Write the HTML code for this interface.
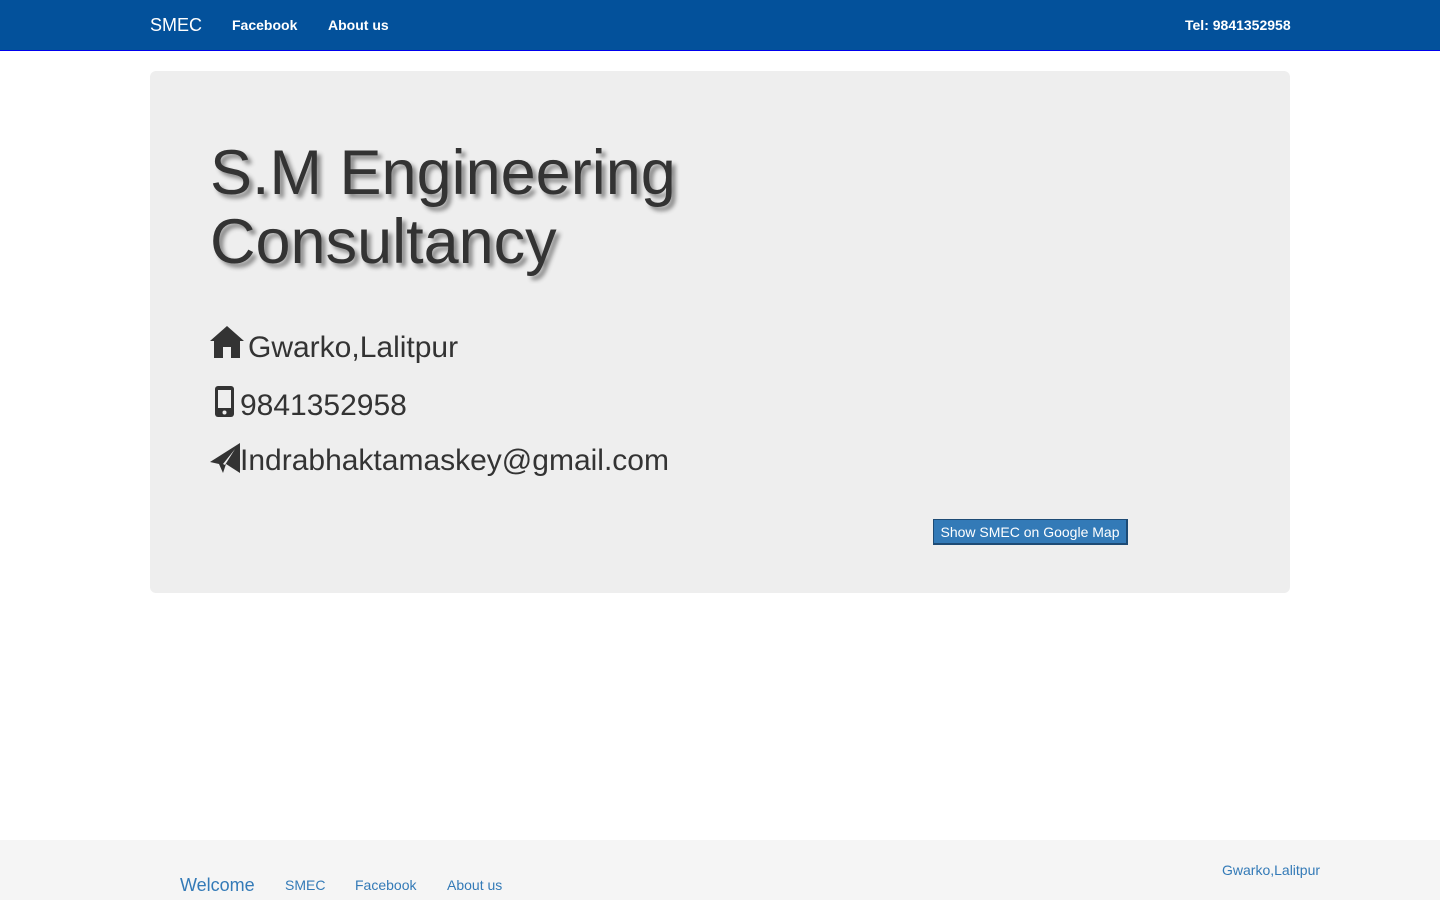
<!DOCTYPE html>
<html><head><meta charset="utf-8"><style>
*{box-sizing:border-box}
body{margin:0;font-family:"Liberation Sans",sans-serif;color:#333;background:#fff;width:1440px;height:910px;overflow:hidden;position:relative}
.nav{height:51px;background:#03519b;border-bottom:1px solid #0000ee;position:relative;color:#fff}
.nav span{position:absolute;top:0;line-height:50px}
.brand{left:150px;font-size:18px}
.nl{font-size:14px;font-weight:bold}
.jumbo{position:absolute;left:150px;top:71px;width:1140px;height:522px;background:#eee;border-radius:6px}
h1{position:absolute;left:60px;top:68px;margin:0;font-size:63px;font-weight:normal;line-height:69px;text-shadow:4px 4px 4px #888;color:#333}
.c{position:absolute;left:60px;font-size:30px;line-height:34px;display:flex;align-items:center}
.btn{position:absolute;left:783px;top:448px;width:195px;height:26px;background:#337ab7;color:#fff;font-size:14px;line-height:24px;text-align:center;border:1px solid #1d4b75;border-right-width:2px;border-bottom-width:2px}
.foot{position:absolute;left:0;top:840px;width:1440px;height:60px;background:#f5f5f5;color:#337ab7}
.foot span{position:absolute}
</style></head><body>
<div class="nav">
<span class="brand">SMEC</span>
<span class="nl" style="left:232px">Facebook</span>
<span class="nl" style="left:328px">About us</span>
<span class="nl" style="left:1185px">Tel: 9841352958</span>
</div>
<div class="jumbo">
<h1>S.M Engineering<br>Consultancy</h1>
<div class="c" style="top:258px"><svg width="34" height="32" viewBox="0 0 34 32" style="margin-right:4px;position:relative;top:-4px"><path d="M17 0L0 15h4v17h9V21h8v11h9V15h4z" fill="#333"/></svg><span style="position:relative;top:2px">Gwarko,Lalitpur</span></div>
<div class="c" style="top:316px"><svg width="30" height="32" viewBox="0 0 30 32" style="position:relative;top:-2px"><rect x="5" y="0" width="19" height="31" rx="3" fill="#333"/><rect x="8" y="4" width="13" height="18" fill="#eee"/><circle cx="14.5" cy="26.5" r="2" fill="#eee"/></svg><span style="position:relative;top:2px">9841352958</span></div>
<div class="c" style="top:373px"><svg width="30" height="32" viewBox="0 0 30 32" style="position:relative;top:-3px"><path d="M30 1L0 20l9 2 4 9 3-9 14 9z M13 22l12-15-10 16z" fill="#333"/></svg>Indrabhaktamaskey@gmail.com</div>
<div class="btn">Show SMEC on Google Map</div>
</div>
<div class="foot">
<span style="left:180px;top:35px;font-size:18px">Welcome</span>
<span style="left:285px;top:37px;font-size:14px">SMEC</span>
<span style="left:355px;top:37px;font-size:14px">Facebook</span>
<span style="left:447px;top:37px;font-size:14px">About us</span>
<span style="left:1222px;top:22px;font-size:14px">Gwarko,Lalitpur</span>
</div>
</body></html>
